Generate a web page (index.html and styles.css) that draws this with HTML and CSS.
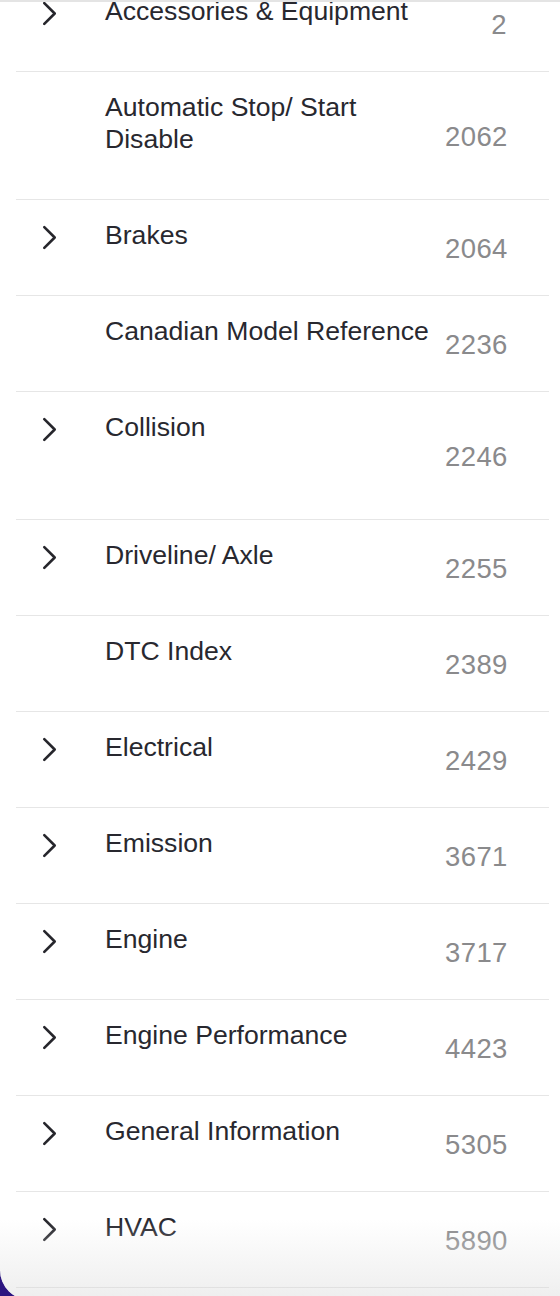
FILE: index.html
```html
<!DOCTYPE html>
<html lang="en">
<head>
  <meta charset="UTF-8" />
  <meta name="viewport" content="width=device-width, initial-scale=1.0" />
  <title>Sections</title>
  <link rel="stylesheet" href="styles.css">
</head>
<body>
  <div class="panel">
    <ul class="list">
      <li class="row"><span class="chev"><svg viewBox="0 0 14 24"><path d="M2 2 L12 12 L2 22"/></svg></span><span class="title">Accessories &amp; Equipment</span><span class="count">2</span></li>
      <li class="row tall"><span class="chev"></span><span class="title">Automatic Stop/ Start Disable</span><span class="count">2062</span></li>
      <li class="row"><span class="chev"><svg viewBox="0 0 14 24"><path d="M2 2 L12 12 L2 22"/></svg></span><span class="title">Brakes</span><span class="count">2064</span></li>
      <li class="row"><span class="chev"></span><span class="title">Canadian Model Reference</span><span class="count">2236</span></li>
      <li class="row tall"><span class="chev"><svg viewBox="0 0 14 24"><path d="M2 2 L12 12 L2 22"/></svg></span><span class="title">Collision</span><span class="count">2246</span></li>
      <li class="row"><span class="chev"><svg viewBox="0 0 14 24"><path d="M2 2 L12 12 L2 22"/></svg></span><span class="title">Driveline/ Axle</span><span class="count">2255</span></li>
      <li class="row"><span class="chev"></span><span class="title">DTC Index</span><span class="count">2389</span></li>
      <li class="row"><span class="chev"><svg viewBox="0 0 14 24"><path d="M2 2 L12 12 L2 22"/></svg></span><span class="title">Electrical</span><span class="count">2429</span></li>
      <li class="row"><span class="chev"><svg viewBox="0 0 14 24"><path d="M2 2 L12 12 L2 22"/></svg></span><span class="title">Emission</span><span class="count">3671</span></li>
      <li class="row"><span class="chev"><svg viewBox="0 0 14 24"><path d="M2 2 L12 12 L2 22"/></svg></span><span class="title">Engine</span><span class="count">3717</span></li>
      <li class="row"><span class="chev"><svg viewBox="0 0 14 24"><path d="M2 2 L12 12 L2 22"/></svg></span><span class="title">Engine Performance</span><span class="count">4423</span></li>
      <li class="row"><span class="chev"><svg viewBox="0 0 14 24"><path d="M2 2 L12 12 L2 22"/></svg></span><span class="title">General Information</span><span class="count">5305</span></li>
      <li class="row last"><span class="chev"><svg viewBox="0 0 14 24"><path d="M2 2 L12 12 L2 22"/></svg></span><span class="title">HVAC</span><span class="count">5890</span></li>
    </ul>
    <div class="fade"></div>
  </div>
</body>
</html>
```

FILE: styles.css
```css
html, body {
  margin: 0;
  height: 100%;
  overflow: hidden;
}
body {
  font-family: "Liberation Sans", Arial, sans-serif;
  background-color: #2c1580;
}
.panel {
  position: relative;
  height: 1298px;
  background: white;
  border-top: 2px solid #e4e4e4;
  border-bottom-left-radius: 30px;
  overflow: hidden;
}
.list {
  list-style: none;
  margin: -26px 11px 0 16px;
  padding: 0;
}
.row {
  display: flex;
  height: 96px;
  box-sizing: border-box;
  border-bottom: 1px solid #e6e6e6;
  padding-right: 42px;
}
.row.tall {
  height: 128px;
}
.row.last {
  border-bottom-color: #d4d4d4;
}
.chev {
  width: 89px;
  flex-shrink: 0;
  padding: 25px 0 0 26px;
  box-sizing: border-box;
}
.chev svg {
  width: 15px;
  height: 25px;
  fill: none;
  stroke: #26262c;
  stroke-width: 2.5;
  stroke-linecap: round;
  stroke-linejoin: round;
}
.title {
  width: 340px;
  flex-shrink: 0;
  padding-top: 19px;
  font-size: 26.6px;
  line-height: 32px;
  color: #28282f;
}
.count {
  flex: 1;
  align-self: center;
  padding-top: 3px;
  text-align: right;
  font-size: 27.5px;
  letter-spacing: 0.4px;
  color: #8a8a8c;
}
.fade {
  position: absolute;
  left: 0;
  right: 0;
  bottom: 0;
  height: 80px;
  background: linear-gradient(to bottom, rgba(240,240,240,0), rgba(232,232,232,0.75));
  pointer-events: none;
}
```
